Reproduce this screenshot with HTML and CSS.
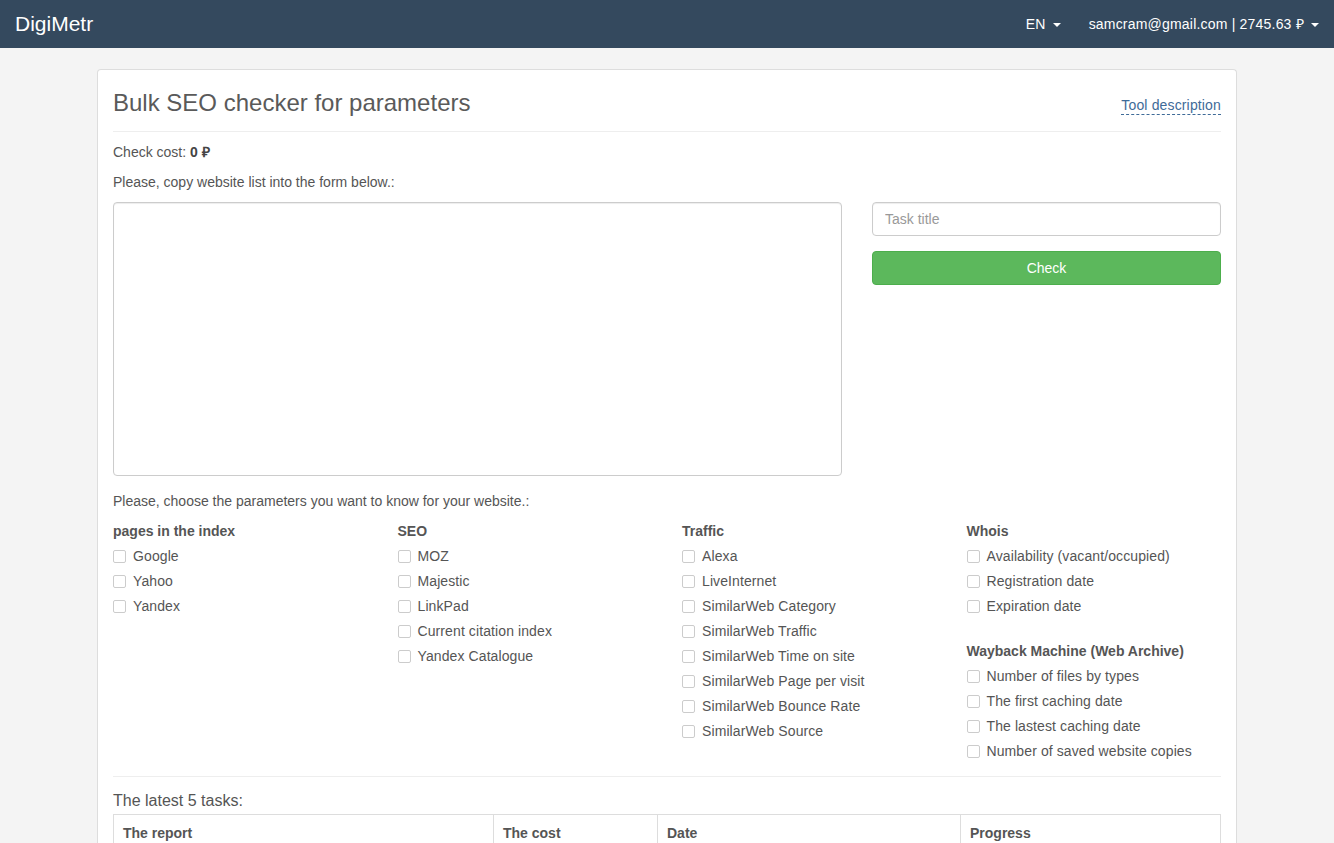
FILE: index.html
```html
<!DOCTYPE html>
<html lang="en">
<head>
<meta charset="utf-8">
<title>DigiMetr - Bulk SEO checker</title>
<link rel="stylesheet" href="styles.css">
</head>
<body>
<nav class="navbar">
  <a class="brand" href="#">DigiMetr</a>
  <div class="nav-right">
    <a class="nav-item" href="#">EN <span class="caret"></span></a>
    <a class="nav-item" href="#">samcram@gmail.com | 2745.63 ₽ <span class="caret"></span></a>
  </div>
</nav>

<main class="container">
  <section class="panel">
    <header class="page-header">
      <h1 class="title">Bulk SEO checker for parameters</h1>
      <a class="tool-link" href="#">Tool description</a>
    </header>

    <p class="text">Check cost: <b>0 ₽</b></p>
    <p class="text">Please, copy website list into the form below.:</p>

    <div class="form-row">
      <div class="col-main">
        <textarea class="sites"></textarea>
      </div>
      <div class="col-side">
        <input class="task-input" type="text" placeholder="Task title">
        <button class="btn-check" type="button">Check</button>
      </div>
    </div>

    <p class="text choose">Please, choose the parameters you want to know for your website.:</p>

    <div class="params">
      <div class="param-col">
        <div class="group-title">pages in the index</div>
        <label class="check"><input type="checkbox"> Google</label>
        <label class="check"><input type="checkbox"> Yahoo</label>
        <label class="check"><input type="checkbox"> Yandex</label>
      </div>
      <div class="param-col">
        <div class="group-title">SEO</div>
        <label class="check"><input type="checkbox"> MOZ</label>
        <label class="check"><input type="checkbox"> Majestic</label>
        <label class="check"><input type="checkbox"> LinkPad</label>
        <label class="check"><input type="checkbox"> Current citation index</label>
        <label class="check"><input type="checkbox"> Yandex Catalogue</label>
      </div>
      <div class="param-col">
        <div class="group-title">Traffic</div>
        <label class="check"><input type="checkbox"> Alexa</label>
        <label class="check"><input type="checkbox"> LiveInternet</label>
        <label class="check"><input type="checkbox"> SimilarWeb Category</label>
        <label class="check"><input type="checkbox"> SimilarWeb Traffic</label>
        <label class="check"><input type="checkbox"> SimilarWeb Time on site</label>
        <label class="check"><input type="checkbox"> SimilarWeb Page per visit</label>
        <label class="check"><input type="checkbox"> SimilarWeb Bounce Rate</label>
        <label class="check"><input type="checkbox"> SimilarWeb Source</label>
      </div>
      <div class="param-col">
        <div class="group-title">Whois</div>
        <label class="check"><input type="checkbox"> Availability (vacant/occupied)</label>
        <label class="check"><input type="checkbox"> Registration date</label>
        <label class="check"><input type="checkbox"> Expiration date</label>
        <div class="group-title spaced">Wayback Machine (Web Archive)</div>
        <label class="check"><input type="checkbox"> Number of files by types</label>
        <label class="check"><input type="checkbox"> The first caching date</label>
        <label class="check"><input type="checkbox"> The lastest caching date</label>
        <label class="check"><input type="checkbox"> Number of saved website copies</label>
      </div>
    </div>

    <hr class="divider">

    <h2 class="tasks-title">The latest 5 tasks:</h2>
    <table class="tasks">
      <thead>
        <tr>
          <th class="c-report">The report</th>
          <th class="c-cost">The cost</th>
          <th class="c-date">Date</th>
          <th class="c-progress">Progress</th>
        </tr>
      </thead>
      <tbody>
        <tr><td>&nbsp;</td><td></td><td></td><td></td></tr>
      </tbody>
    </table>
  </section>
</main>
</body>
</html>
```

FILE: styles.css
```css
* { box-sizing: border-box; }

html, body {
  margin: 0;
  padding: 0;
}

body {
  background: #f4f4f4;
  font-family: "Liberation Sans", Arial, sans-serif;
  font-size: 14px;
  line-height: 20px;
  color: #555;
}

a { text-decoration: none; }

.navbar {
  height: 48px;
  background: #34495e;
  display: flex;
  align-items: center;
  justify-content: space-between;
  padding: 0 15px;
}

.brand {
  color: #fff;
  font-size: 21px;
  line-height: 24px;
}

.nav-right {
  display: flex;
  align-items: center;
  gap: 28px;
}

.nav-item {
  color: #fff;
  font-size: 14px;
  letter-spacing: 0.2px;
}

.caret {
  display: inline-block;
  width: 0;
  height: 0;
  margin-left: 3px;
  vertical-align: middle;
  border-top: 4px solid #fff;
  border-left: 4px solid transparent;
  border-right: 4px solid transparent;
}

.container {
  width: 1140px;
  margin: 21px auto 0;
}

.panel {
  background: #fff;
  border: 1px solid #ddd;
  border-bottom: none;
  border-radius: 4px 4px 0 0;
  padding: 15px 15px 0;
}

.page-header {
  display: flex;
  align-items: baseline;
  justify-content: space-between;
  border-bottom: 1px solid #eee;
  padding-bottom: 11px;
  margin-bottom: 10px;
}

.title {
  margin: 1px 0 0;
  font-size: 24px;
  line-height: 34px;
  font-weight: normal;
  color: #5a5a5a;
}

.tool-link {
  color: #3f6b98;
  font-size: 14px;
  line-height: 17px;
  letter-spacing: 0.15px;
  border-bottom: 1px dashed #3f6b98;
  position: relative;
  top: -1px;
}

.text {
  margin: 0 0 10px;
}

.text b { color: #444; }

.form-row {
  display: flex;
  gap: 30px;
}

.col-main { width: 729px; }
.col-side { width: 349px; }

.sites {
  display: block;
  width: 100%;
  height: 274px;
  border: 1px solid #ccc;
  border-radius: 4px;
  resize: none;
  font-family: inherit;
  font-size: 14px;
  padding: 6px 12px;
  box-shadow: inset 0 1px 1px rgba(0,0,0,0.075);
}

.task-input {
  display: block;
  width: 100%;
  height: 34px;
  border: 1px solid #ccc;
  border-radius: 4px;
  padding: 6px 12px;
  font-family: inherit;
  font-size: 14px;
  color: #555;
  box-shadow: inset 0 1px 1px rgba(0,0,0,0.075);
}

.task-input::placeholder { color: #999; }

.btn-check {
  display: block;
  width: 100%;
  height: 34px;
  margin-top: 15px;
  background: #5cb85c;
  border: 1px solid #4cae4c;
  border-radius: 4px;
  color: #fff;
  font-family: inherit;
  font-size: 14px;
}

.choose {
  margin-top: 15px;
  margin-bottom: 10px;
}

.params {
  display: grid;
  grid-template-columns: repeat(4, 1fr);
  column-gap: 0;
  width: calc(100% + 30px);
}

.param-col {
  display: flex;
  flex-direction: column;
  gap: 5px;
  padding-right: 15px;
}

.group-title {
  font-weight: bold;
  line-height: 20px;
}

.group-title.spaced { margin-top: 20px; }

.check {
  display: flex;
  align-items: center;
  height: 20px;
  line-height: 20px;
  letter-spacing: 0.1px;
  cursor: pointer;
}

.check input {
  appearance: none;
  -webkit-appearance: none;
  width: 13px;
  height: 13px;
  margin: 0 7px 0 0;
  border: 1px solid #ccc;
  border-radius: 2px;
  background: #fff;
  flex: none;
}

.divider {
  border: 0;
  border-top: 1px solid #eee;
  margin: 15px 0 14px;
}

.tasks-title {
  margin: 0 0 3px;
  font-size: 16px;
  line-height: 20px;
  font-weight: normal;
  color: #555;
}

.tasks {
  width: 100%;
  border-collapse: collapse;
  border: 1px solid #ddd;
}

.tasks th, .tasks td {
  border: 1px solid #ddd;
  padding: 8px 9px;
  text-align: left;
  line-height: 20px;
}

.tasks th { font-weight: bold; color: #555; }

.c-report { width: 380px; }
.c-cost { width: 164px; }
.c-date { width: 303px; }
```
